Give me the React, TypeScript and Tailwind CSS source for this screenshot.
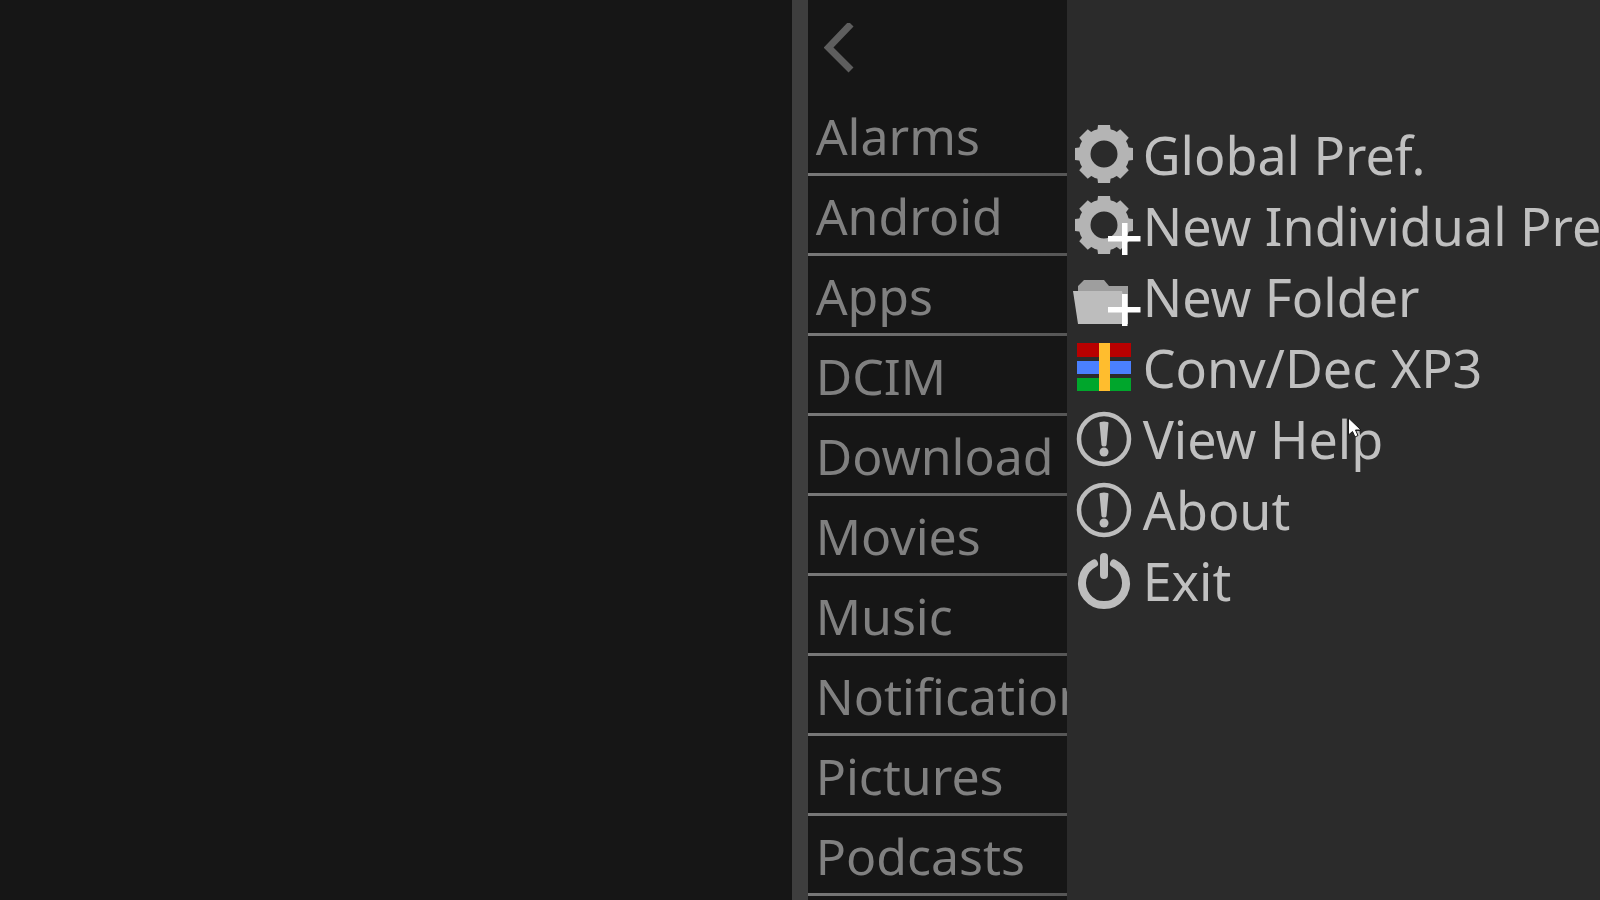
import type { ReactNode } from "react";

const folders = [
  "Alarms",
  "Android",
  "Apps",
  "DCIM",
  "Download",
  "Movies",
  "Music",
  "Notifications",
  "Pictures",
  "Podcasts",
];

const Icon = ({ children }: { children: ReactNode }) => (
  <svg className="h-[71px] w-[76px] shrink-0" viewBox="0 0 76 71" fill="#bdbdbd" aria-hidden="true">
    {children}
  </svg>
);

const Gear = () => (
  <g fill="#b4b4b4">
    <circle cx="37" cy="36" r="19.500" fill="none" stroke="#b4b4b4" strokeWidth="12" />
    {[0, 45, 90, 135, 180, 225, 270, 315].map((angle) => (
      <path key={angle} d="M31 7h12l1 8h-14z" transform={`rotate(${angle} 37 36)`} />
    ))}
  </g>
);

const Plus = () => <path d="M55 34h5.500v13h13v5.500h-13v13.500h-5.500v-13.500h-14v-5.500h14z" fill="#ffffff" />;

const Exclamation = () => (
  <>
    <circle cx="37" cy="37" r="25" fill="none" stroke="#bdbdbd" strokeWidth="4.500" />
    <path d="M32.500 21q0-1.500 4.500-1.500t4.500 1.500l-2 22q-.2 1.500-2.500 1.500t-2.500-1.500z" />
    <circle cx="37" cy="50" r="4.500" />
  </>
);

const menu = [
  { label: "Global Pref.", icon: <Gear /> },
  {
    label: "New Individual Pref.",
    icon: (
      <>
        <Gear />
        <Plus />
      </>
    ),
  },
  {
    label: "New Folder",
    icon: (
      <>
        <path d="M11 31v-5l6-6h20l5 6h19v38h-8z" fill="#9e9e9e" />
        <path d="M6 31h49l6 30v3h-50z" />
        <Plus />
      </>
    ),
  },
  {
    label: "Conv/Dec XP3",
    icon: (
      <>
        <path d="M10 12h54v14h-54z" fill="#b80000" />
        <path d="M10 30h54v13h-54z" fill="#4a80ff" />
        <path d="M10 47h54v13h-54z" fill="#00a62c" />
        <path d="M32 12h11v48h-11z" fill="#ffbd2e" />
      </>
    ),
  },
  { label: "View Help", icon: <Exclamation /> },
  { label: "About", icon: <Exclamation /> },
  {
    label: "Exit",
    icon: (
      <g fill="none" stroke="#bdbdbd" strokeLinecap="round">
        <path d="M27 19.500a22 22 0 1 0 20 0" strokeWidth="8" />
        <path d="M37 13v18" strokeWidth="8" />
      </g>
    ),
  },
];

const Cursor = () => (
  <svg className="pointer-events-none absolute left-[281px] top-[417px] h-[22px] w-3.5" viewBox="0 0 14 22" aria-hidden="true">
    <path d="M.5 1v17l4-3.500 2.500 5.500 3-1.500-2.500-5.500h5.500z" fill="#ffffff" stroke="#1a1a1a" />
  </svg>
);

export default function App() {
  return (
    <div className="flex h-screen overflow-hidden bg-[#161616] font-['Noto_Sans',sans-serif]">
      <main className="min-w-0 flex-1" />
      <div className="w-4 shrink-0 bg-[#3e3e3e]" />

      <nav className="w-[259px] shrink-0 overflow-hidden text-[50px] text-[#808080]" aria-label="Folders">
        <button className="block h-24 w-full pl-4" aria-label="Back">
          <svg className="h-[50px] w-[30px]" viewBox="0 0 30 50" fill="none" aria-hidden="true">
            <path d="M27 1l-22.500 23.500 22.500 22.500" stroke="#5e5e5e" strokeWidth="7" />
          </svg>
        </button>
        <ul>
          {folders.map((name) => (
            <li key={name}>
              <button className="block h-[77px] w-full pl-2 text-left leading-[80px] whitespace-nowrap">{name}</button>
              <div className="h-[3px] bg-linear-to-r from-[#787878] to-[#565656]" />
            </li>
          ))}
        </ul>
      </nav>

      <aside className="relative w-1/3 shrink-0 overflow-hidden bg-[#2b2b2b] pt-[118px] text-[52px] text-[#c0c0c0]">
        <ul>
          {menu.map(({ label, icon }) => (
            <li key={label}>
              <button className="flex h-[71px] items-start leading-[74px] whitespace-nowrap">
                <Icon>{icon}</Icon>
                {label}
              </button>
            </li>
          ))}
        </ul>
        <Cursor />
      </aside>
    </div>
  );
}
